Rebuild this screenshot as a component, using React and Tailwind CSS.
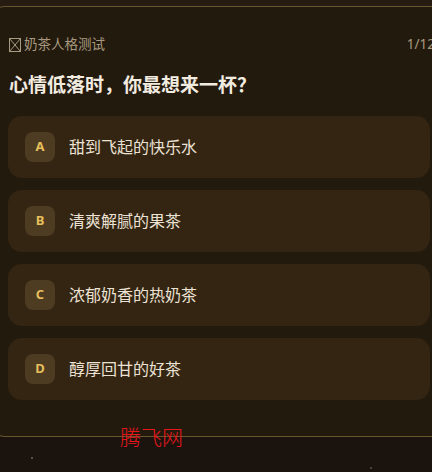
import React from "react";

const options = [
  ["A", "甜到飞起的快乐水"],
  ["B", "清爽解腻的果茶"],
  ["C", "浓郁奶香的热奶茶"],
  ["D", "醇厚回甘的好茶"],
];

export default function App() {
  return (
    <div
      className="relative w-[432px] h-[472px] overflow-hidden bg-[#1b140e]"
      style={{ fontFamily: '"Noto Sans", "Noto Sans CJK SC", sans-serif' }}
    >
      <div className="h-[6px] bg-[#261c12]" />
      <div className="ml-[-8px] w-[456px] h-[431px] rounded-[12px] border border-[#6a5530] bg-[#231a0e] pl-[15px] pt-[29px]">
        <div className="flex items-center w-[427px] h-[18px] pl-[1px]">
          <svg width="12" height="14" viewBox="0 0 12 14" className="mr-[3px]">
            <rect x="0.5" y="0.5" width="11" height="13" fill="none" stroke="#a89a80" strokeWidth="1" />
            <path d="M0.5 0.5 L11.5 13.5 M11.5 0.5 L0.5 13.5" stroke="#a89a80" strokeWidth="1" />
          </svg>
          <span className="text-[13.5px] text-[#a89a80] leading-none">奶茶人格测试</span>
          <span className="ml-auto text-[13.5px] text-[#a89a80] leading-none">1/12</span>
        </div>
        <div className="mt-[19px] pl-[1px] text-[19px] font-bold text-[#f2ebe0] leading-[24px]">
          心情低落时，你最想来一杯？
        </div>
        <div className="mt-[19px] flex flex-col gap-[12px] w-[422px]">
          {options.map(([k, t]) => (
            <div
              key={k}
              className="flex items-center h-[62px] rounded-[14px] bg-[#342513] pl-[17px]"
            >
              <div className="flex items-center justify-center w-[30px] h-[30px] rounded-[8px] bg-[#4e3c22] text-[13px] font-bold text-[#e6bf5c]">
                {k}
              </div>
              <span className="ml-[14px] text-[16px] text-[#ece2d4]">{t}</span>
            </div>
          ))}
        </div>
      </div>
      <div
        className="absolute left-[120px] top-[426px] text-[21px] text-[#e8161b] leading-none"
        style={{ fontFamily: '"Noto Sans CJK SC", sans-serif', fontWeight: 300 }}
      >
        腾飞网
      </div>
      <div className="absolute left-[31px] top-[457px] w-[2px] h-[2px] rounded-full bg-[#6b6258]" />
      <div className="absolute left-[370px] top-[467px] w-[2px] h-[2px] rounded-full bg-[#5a5148]" />
    </div>
  );
}
